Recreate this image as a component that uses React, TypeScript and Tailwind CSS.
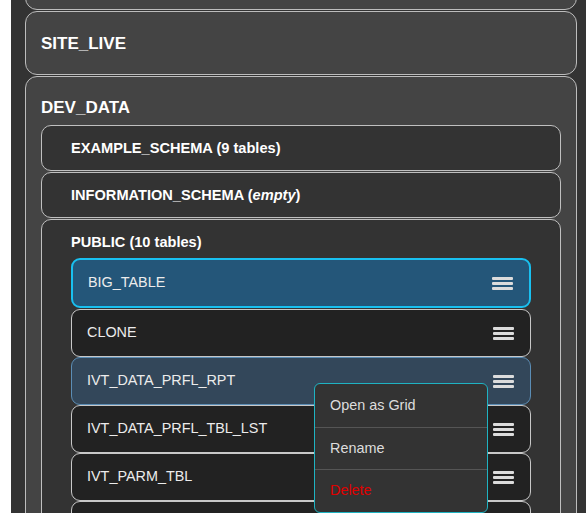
import React from "react";

type Table = { name: string; state?: "selected" | "hover" };

const tables: Table[] = [
  { name: "BIG_TABLE", state: "selected" },
  { name: "CLONE" },
  { name: "IVT_DATA_PRFL_RPT", state: "hover" },
  { name: "IVT_DATA_PRFL_TBL_LST" },
  { name: "IVT_PARM_TBL" },
];

function MenuIcon() {
  return (
    <div className="flex w-[21px] shrink-0 flex-col gap-[2px]">
      <div className="h-[3px] rounded-[1px] bg-[#dcdcdc]" />
      <div className="h-[3px] rounded-[1px] bg-[#dcdcdc]" />
      <div className="h-[3px] rounded-[1px] bg-[#dcdcdc]" />
    </div>
  );
}

function TableRow({ table }: { table: Table }) {
  const cls =
    table.state === "selected"
      ? "mb-[1px] h-[50px] border-2 border-[#19c0f0] bg-[#245679]"
      : table.state === "hover"
      ? "h-[48px] border border-[#5b8db5] bg-[#33475a]"
      : "h-[48px] border border-[#c8c8c8] bg-[#222]";
  return (
    <div className={`flex shrink-0 items-center justify-between rounded-[9px] pl-[15px] pr-[16px] ${cls}`}>
      <span className="text-[14.4px] text-[#ececec]">{table.name}</span>
      <MenuIcon />
    </div>
  );
}

function SchemaCard({ children }: { children: React.ReactNode }) {
  return (
    <div className="rounded-[10px] border border-[#c0c0c0] bg-[#333] px-[29px] py-[14px]">
      <div className="text-[14.6px] leading-[16px] font-bold text-white">{children}</div>
    </div>
  );
}

export default function App() {
  return (
    <div className="relative h-[513px] w-[586px] overflow-hidden bg-white pl-[11px] font-['Liberation_Sans',Arial,sans-serif]">
      <div className="h-full overflow-hidden bg-[#333] pl-[14px] pr-[9px]">
        <div className="flex flex-col gap-[1px]">
          {/* list is scrolled: only the bottom edge of the first database shows */}
          <div className="-mt-[54px] h-[64px] rounded-[12px] border border-[#bdbdbd] bg-[#444]" />

          <div className="rounded-[12px] border border-[#bdbdbd] bg-[#444] px-[15px] pt-[21px] pb-[19px]">
            <div className="text-[17px] leading-[22px] font-bold text-white">SITE_LIVE</div>
          </div>

          <div className="rounded-[12px] border border-[#bdbdbd] bg-[#444] px-[15px] pt-[20px]">
            <div className="pb-[6px] text-[17px] leading-[22px] font-bold text-white">DEV_DATA</div>

            <div className="flex flex-col gap-[1px]">
              <SchemaCard>EXAMPLE_SCHEMA (9 tables)</SchemaCard>
              <SchemaCard>
                INFORMATION_SCHEMA (<i>empty</i>)
              </SchemaCard>

              <div className="rounded-[10px] border border-[#c0c0c0] bg-[#333] px-[29px] pt-[14px]">
                <div className="pb-[8px] text-[14.6px] leading-[16px] font-bold text-white">
                  PUBLIC (10 tables)
                </div>
                <div className="flex flex-col">
                  {tables.map((t) => (
                    <TableRow key={t.name} table={t} />
                  ))}
                  <div className="h-[48px] shrink-0 rounded-[9px] border border-[#c8c8c8] bg-[#222]" />
                </div>
              </div>
            </div>
          </div>
        </div>
      </div>

      {/* context menu for the hovered table */}
      <div className="absolute top-[383px] left-[314px] w-[174px] overflow-hidden rounded-[6px] border border-[#1fb3c2] bg-[#333] text-[14.4px]">
        <div className="flex h-[44px] items-center border-b border-[#555] px-[15px] text-[#ddd]">Open as Grid</div>
        <div className="flex h-[42px] items-center border-b border-[#555] px-[15px] text-[#ddd]">Rename</div>
        <div className="flex h-[42px] items-center px-[15px] text-[#e00000]">Delete</div>
      </div>
    </div>
  );
}
